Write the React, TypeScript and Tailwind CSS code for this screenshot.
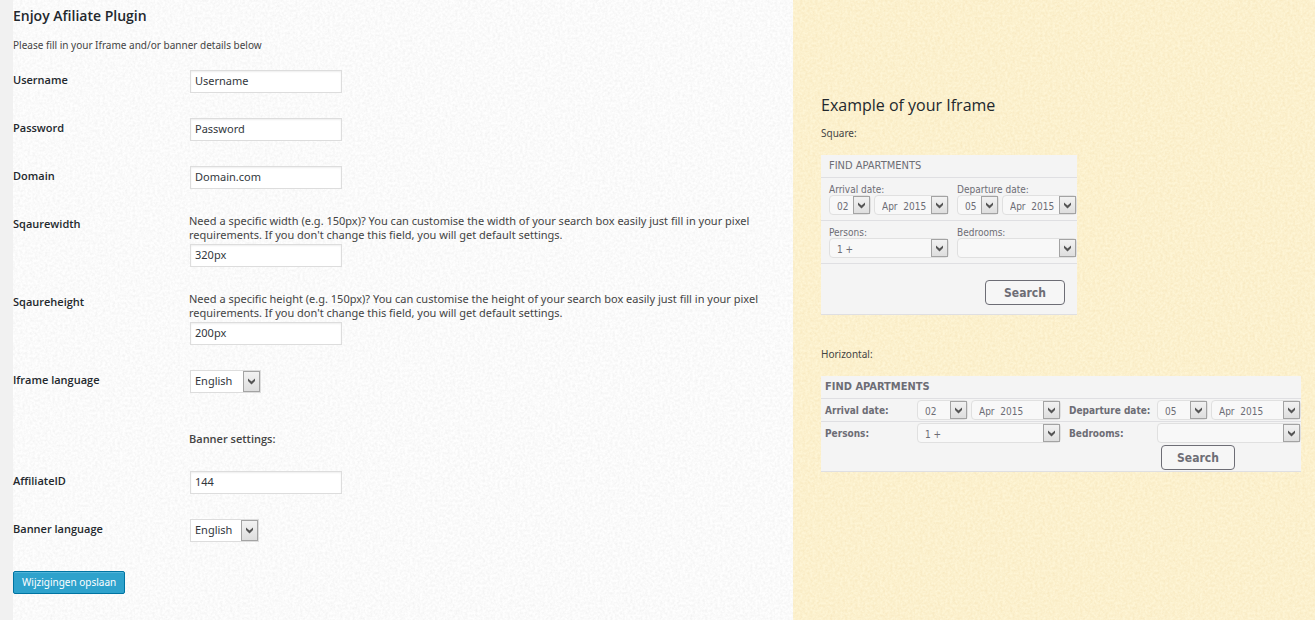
import { useId, type ReactNode } from "react";

function PaperTexture({ id, matrix }: { id: string; matrix: string }) {
  return (
    <svg aria-hidden="true" className="pointer-events-none absolute inset-0 h-full w-full">
      <filter id={id} x="0" y="0" width="100%" height="100%" colorInterpolationFilters="sRGB">
        <feTurbulence type="fractalNoise" baseFrequency="0.4" numOctaves="3" seed="4" />
        <feColorMatrix values={matrix} />
      </filter>
      <rect width="100%" height="100%" filter={`url(#${id})`} />
    </svg>
  );
}

function ArrowBox() {
  return (
    <span className="pointer-events-none absolute inset-y-0 right-0 flex w-[17px] items-center justify-center border border-[#a3a3a3] bg-linear-to-b from-[#f2f2f2] to-[#dedede]">
      <svg width="9" height="7" viewBox="0 0 9 7" aria-hidden="true">
        <path d="M1 0.5 L4.5 3.5 L8 0.5 V3 L4.5 6.5 L1 3 Z" fill="#555" />
      </svg>
    </span>
  );
}

function PlainSelect({ id, width }: { id: string; width: string }) {
  return (
    <span className={`relative ml-px block h-[23px] border border-[#ddd] bg-white p-px ${width}`}>
      <select id={id} className="block h-full w-full appearance-none bg-transparent pl-[3px] text-[11px] text-[#32373c] outline-none">
        <option>English</option>
        <option>Nederlands</option>
      </select>
      <ArrowBox />
    </span>
  );
}

function SoftSelect({ label, id, value, className }: { label?: string; id?: string; value: string; className: string }) {
  return (
    <span className={`relative block h-5 rounded-[4px] border border-[#e0e0e0] bg-[#f8f8f8] ${className}`}>
      <select
        id={id}
        aria-label={label}
        className="block h-full w-full appearance-none bg-transparent pt-0.5 pl-[7px] font-['DejaVu_Sans_Condensed','DejaVu_Sans',sans-serif] text-[10px] font-normal text-[#6d6d75] outline-none"
      >
        <option>{value}</option>
      </select>
      <ArrowBox />
    </span>
  );
}

function Field({ label, id, children }: { label: string; id: string; children: ReactNode }) {
  return (
    <div className="grid grid-cols-[176px_1fr] items-start">
      <label htmlFor={id} className="font-['Open_Sans',sans-serif] text-[11px] leading-5 font-semibold text-[#23282d]">
        {label}
      </label>
      <div>{children}</div>
    </div>
  );
}

function TextBox({ id, value }: { id: string; value: string }) {
  return (
    <input
      id={id}
      type="text"
      defaultValue={value}
      className="ml-px block h-[23px] w-[152px] border border-[#ddd] bg-white px-1 pb-0.5 text-[11px] text-[#32373c] shadow-[inset_0_1px_2px_rgba(0,0,0,0.07)] outline-none"
    />
  );
}

function Hint({ children }: { children: ReactNode }) {
  return <p className="pb-0.5 text-[11px] leading-[14px] text-[#444]">{children}</p>;
}

function SearchButton({ className }: { className: string }) {
  return (
    <button type="button" className={`block h-[25px] rounded-[4px] border border-[#6d6d75] bg-[#f6f6f6] text-[12px] font-bold text-[#6d6d75] ${className}`}>
      Search
    </button>
  );
}

function SquareSearch() {
  const id = useId();
  return (
    <form className="w-full max-w-64 border-b border-[#dfdfe2] bg-[#f4f4f4] font-['DejaVu_Sans_Condensed','DejaVu_Sans',sans-serif] text-[10px] text-[#6d6d75]">
      <h3 className="border-b border-[#dfdfe2] pl-2 text-[11px] leading-[22px]">FIND APARTMENTS</h3>
      <div className="grid grid-cols-2 border-b border-[#dfdfe2] pt-1.5 pb-[5px]">
        <div className="pl-2">
          <label htmlFor={`${id}-a`} className="block leading-[11px]">Arrival date:</label>
          <div className="flex gap-[3px]">
            <SoftSelect id={`${id}-a`} value="02" className="w-[42px]" />
            <SoftSelect label="Arrival month" value={"Apr\u00a0\u00a02015"} className="flex-1" />
          </div>
        </div>
        <div className="pl-2">
          <label htmlFor={`${id}-d`} className="block leading-[11px]">Departure date:</label>
          <div className="flex gap-[3px]">
            <SoftSelect id={`${id}-d`} value="05" className="w-[42px]" />
            <SoftSelect label="Departure month" value={"Apr\u00a0\u00a02015"} className="flex-1" />
          </div>
        </div>
      </div>
      <div className="grid grid-cols-2 border-b border-[#dfdfe2] pt-1.5 pb-[5px]">
        <div className="pl-2">
          <label htmlFor={`${id}-p`} className="block leading-[11px]">Persons:</label>
          <SoftSelect id={`${id}-p`} value="1 +" className="w-full" />
        </div>
        <div className="pl-2">
          <label htmlFor={`${id}-b`} className="block leading-[11px]">Bedrooms:</label>
          <SoftSelect id={`${id}-b`} value="" className="w-full" />
        </div>
      </div>
      <div className="flex justify-end pt-4 pr-3 pb-[9px]">
        <SearchButton className="w-20" />
      </div>
    </form>
  );
}

function HorizontalSearch() {
  const id = useId();
  return (
    <form className="w-full max-w-[480px] border-b border-[#dfdfe2] bg-[#f4f4f4] font-['DejaVu_Sans_Condensed','DejaVu_Sans',sans-serif] text-[10px] font-bold text-[#6d6d75]">
      <h3 className="border-b border-[#dfdfe2] pl-1 text-[11px] leading-[22px]">FIND APARTMENTS</h3>
      <div className="grid grid-cols-[92px_1fr_96px_1fr] items-center border-b border-[#dfdfe2] py-px pl-1">
        <label htmlFor={`${id}-a`}>Arrival date:</label>
        <div className="flex gap-[3px]">
          <SoftSelect id={`${id}-a`} value="02" className="w-[51px]" />
          <SoftSelect label="Arrival month" value={"Apr\u00a0\u00a02015"} className="flex-1" />
        </div>
        <label htmlFor={`${id}-d`} className="pl-2">Departure date:</label>
        <div className="flex gap-[3px]">
          <SoftSelect id={`${id}-d`} value="05" className="w-[51px]" />
          <SoftSelect label="Departure month" value={"Apr\u00a0\u00a02015"} className="flex-1" />
        </div>
      </div>
      <div className="grid grid-cols-[92px_1fr_96px_1fr] items-center gap-y-0.5 py-px pl-1">
        <label htmlFor={`${id}-p`}>Persons:</label>
        <SoftSelect id={`${id}-p`} value="1 +" className="w-full" />
        <label htmlFor={`${id}-b`} className="pl-2">Bedrooms:</label>
        <SoftSelect id={`${id}-b`} value="" className="w-full" />
        <SearchButton className="col-start-4 ml-1 w-[74px]" />
      </div>
    </form>
  );
}

export default function App() {
  return (
    <div className="grid min-h-screen grid-cols-[13px_780fr_522fr] bg-[#f1f1f1] font-['Noto_Sans','Open_Sans',sans-serif]">
      <main className="relative col-start-2 bg-[#fefefe]">
        <PaperTexture id="paper-light" matrix="0 0 0 0 0.9  0 0 0 0 0.9  0 0 0 0 0.9  0.8 0 0 0 -0.25" />
        <form className="relative pt-1.5 pr-3 pb-6">
          <h1 className="font-['Open_Sans',sans-serif] text-[14px] leading-5 font-semibold text-[#23282d]">Enjoy Afiliate Plugin</h1>
          <p className="mt-3 mb-[18px] text-[10px] leading-[14px] text-[#444]">Please fill in your Iframe and/or banner details below</p>
          <div className="flex flex-col gap-[25px]">
            <Field label="Username" id="username"><TextBox id="username" value="Username" /></Field>
            <Field label="Password" id="password"><TextBox id="password" value="Password" /></Field>
            <Field label="Domain" id="domain"><TextBox id="domain" value="Domain.com" /></Field>
            <Field label="Sqaurewidth" id="width">
              <Hint>
                Need a specific width (e.g. 150px)? You can customise the width of your search box easily just fill in your pixel requirements. If you don't change this field, you will get default settings.
              </Hint>
              <TextBox id="width" value="320px" />
            </Field>
            <Field label="Sqaureheight" id="height">
              <Hint>
                Need a specific height (e.g. 150px)? You can customise the height of your search box easily just fill in your pixel requirements. If you don't change this field, you will get default settings.
              </Hint>
              <TextBox id="height" value="200px" />
            </Field>
            <Field label="Iframe language" id="iframe-language"><PlainSelect id="iframe-language" width="w-[71px]" /></Field>
            <h2 className="ml-[176px] pt-[13px] font-['Open_Sans',sans-serif] text-[11px] leading-[15px] font-semibold text-[#444]">Banner settings:</h2>
            <Field label="AffiliateID" id="affiliate"><TextBox id="affiliate" value="144" /></Field>
            <Field label="Banner language" id="banner-language"><PlainSelect id="banner-language" width="w-[69px]" /></Field>
          </div>
          <button type="button" className="mt-[29px] block h-[23px] rounded-[2px] border border-[#0074a2] bg-[#2ea2cc] px-2 text-[10px] text-white shadow-[inset_0_1px_0_rgba(120,200,230,0.5)]">
            Wijzigingen opslaan
          </button>
        </form>
      </main>
      <aside className="relative bg-[#fef5d5]">
        <PaperTexture id="paper-cream" matrix="0 0 0 0 0.95  0 0 0 0 0.87  0 0 0 0 0.68  0.8 0 0 0 -0.2" />
        <div className="relative pt-[94px] pr-3 pl-7">
          <h2 className="font-['Open_Sans',sans-serif] text-[16px] leading-[22px] text-[#23282d]">Example of your Iframe</h2>
          <p className="mt-2.5 mb-[15px] text-[10px] leading-[14px] text-[#444]">Square:</p>
          <SquareSearch />
          <p className="mt-8 mb-[15px] text-[10px] leading-[14px] text-[#444]">Horizontal:</p>
          <HorizontalSearch />
        </div>
      </aside>
    </div>
  );
}
